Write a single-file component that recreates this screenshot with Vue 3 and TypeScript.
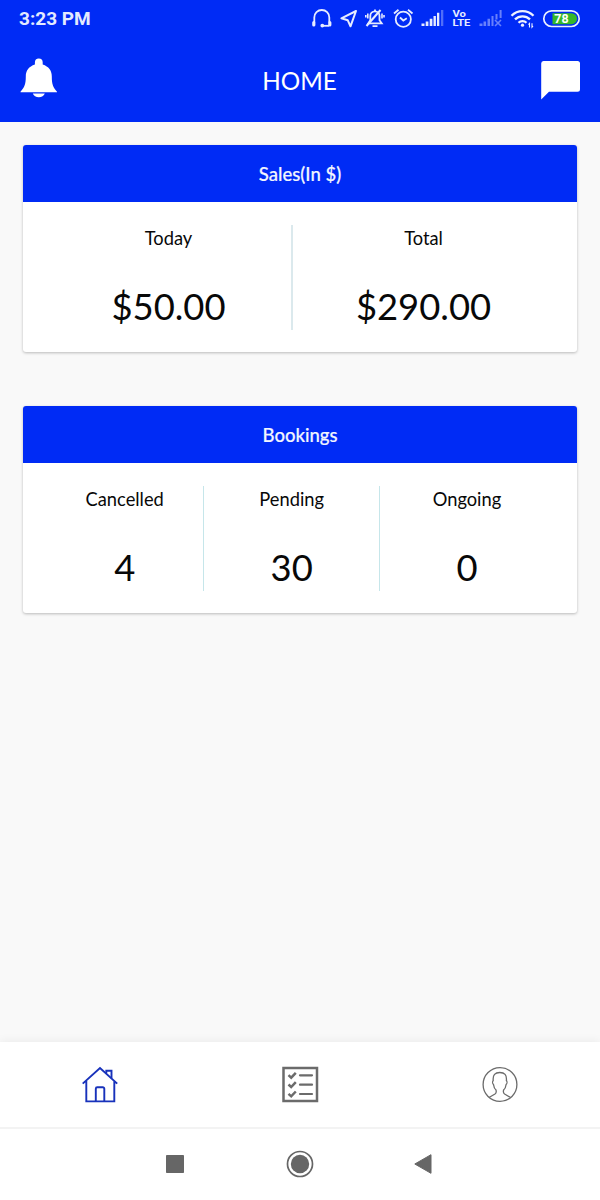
<script setup lang="ts">
interface Stat {
  label: string
  value: string
}

interface Summary {
  title: string
  kind: string
  stats: Stat[]
}

const summaries: Summary[] = [
  {
    title: 'Sales(In $)',
    kind: 'sales',
    stats: [
      { label: 'Today', value: '$50.00' },
      { label: 'Total', value: '$290.00' },
    ],
  },
  {
    title: 'Bookings',
    kind: 'bookings',
    stats: [
      { label: 'Cancelled', value: '4' },
      { label: 'Pending', value: '30' },
      { label: 'Ongoing', value: '0' },
    ],
  },
]
</script>

<template>
  <div class="screen">
    <header class="top">
      <div class="status">
        <span class="clock">3:23 PM</span>
        <div class="status-icons">
          <!-- headset -->
          <svg width="28" height="22" viewBox="310 8 28 22" fill="none" stroke="#e6ecff" stroke-width="1.8">
            <path d="M314.300 22.500V17.500a7.500 7.500 0 0 1 15 0v5" />
            <path d="M313.800 22.500v2.500M329.800 22.500v2.500" stroke-width="3.200" stroke-linecap="round" />
            <path d="M329 25.800h-7" />
            <circle cx="322.300" cy="25.600" r="1" fill="#e6ecff" />
          </svg>
          <!-- location arrow -->
          <svg width="25" height="22" viewBox="338 8 25 22" fill="none" stroke="#e6ecff" stroke-width="2" stroke-linejoin="round">
            <path d="M356 11L341.400 18.300l6.400 2 2.700 6z" />
          </svg>
          <!-- muted bell -->
          <svg width="28" height="22" viewBox="363 8 28 22" fill="none" stroke="#e6ecff" stroke-width="1.800">
            <path d="M368.300 23.300h13.400l-2.200-3v-4.300a4.600 4.600 0 0 0-9.200 0v4.300z" />
            <path d="M372.500 26.200h5M375 9.500v2" />
            <path d="M367.800 13.500v5M365.800 15v2.500M382 13.500v5M384 15v2.500" stroke-width="1.600" />
            <path d="M366.500 26L380.500 10" stroke-width="2" />
          </svg>
          <!-- alarm clock -->
          <svg width="29" height="22" viewBox="391 8 29 22" fill="none" stroke="#e6ecff" stroke-width="1.800">
            <circle cx="403.300" cy="19.200" r="7.600" />
            <path d="M400 17.500l3.300 3 3.500-2.200M394 13.500l4.500-3.800M412.500 13.500L408 9.700" />
          </svg>
          <!-- signal -->
          <svg width="30" height="22" viewBox="420 8 30 22" fill="#e6ecff">
            <path d="M421.500 23.500h3V26h-3zM425.700 21.500h2.700V26h-2.700zM429.700 18.800h2.700V26h-2.700zM433.500 16h2.400v10h-2.400zM437 12.800h2.300V26H437z" />
            <path d="M441 10h2.300v16H441z" opacity=".35" />
          </svg>
          <!-- VoLTE -->
          <svg width="28" height="22" viewBox="450 8 28 22">
            <text class="volte" x="452.400" y="16.500" textLength="13.500" lengthAdjust="spacingAndGlyphs">Vo</text>
            <text class="volte" x="452.400" y="26.300" textLength="18" lengthAdjust="spacingAndGlyphs">LTE</text>
          </svg>
          <!-- second sim, no signal -->
          <svg width="32" height="22" viewBox="478 8 32 22" fill="#6880fb">
            <path d="M479.500 23.500h3V26h-3zM483.500 21.500h2.600V26h-2.600zM487.500 18.800h2.500V26h-2.500zM491.500 16h2v10h-2zM495.500 14h2v5.500h-2zM499.600 10h2v8h-2z" />
            <path d="M495 20l6 6M501 20l-6 6" stroke="#6880fb" stroke-width="1.600" />
          </svg>
          <!-- wifi -->
          <svg width="32" height="22" viewBox="510 8 32 22" fill="none" stroke="#eef2ff" stroke-width="2.300">
            <path d="M511.500 15.800a15.500 15.500 0 0 1 22 0M515 19.400a10.600 10.600 0 0 1 15 0M518.500 22.800a5.700 5.700 0 0 1 8 0" />
            <circle cx="522.500" cy="25.200" r="1.600" fill="#eef2ff" stroke="none" />
            <path d="M529.500 27.500v-4l-1 1.200M532 23.200v4l1-1.200" stroke-width="1.100" />
          </svg>
          <!-- battery -->
          <svg width="40" height="22" viewBox="542 8 40 22">
            <rect x="543.800" y="10.900" width="35.400" height="15.600" rx="7.800" fill="#002bf5" stroke="#eaf0ff" stroke-width="1.700" />
            <path d="M552.500 13.200h19a5.500 5.500 0 0 1 0 11h-19z" fill="#35b82a" />
            <text class="battery" x="561.500" y="23.100">78</text>
          </svg>
        </div>
      </div>
      <div class="appbar">
        <svg width="38" height="40" viewBox="20 58.5 38 40" fill="#fff">
          <path d="M34.900 65v-2a3.900 3.900 0 0 1 7.800 0v2c6 2 9.100 6 9.100 12 0 8 1.200 10.500 5.200 15.300V92.800H20.500v-.5C24.500 87.500 25.800 85 25.800 77c0-6 3.100-10 9.100-12z" />
          <path d="M32.800 94h12c-.8 2.400-3.200 3.800-6 3.800s-5.200-1.400-6-3.800z" />
        </svg>
        <h1>HOME</h1>
        <svg width="40" height="40" viewBox="541 60 40 40" fill="#fff">
          <path d="M543.500 61H577.500a2.500 2.500 0 0 1 2.500 2.500V89.200a2.500 2.500 0 0 1-2.500 2.500H549L541.200 99.500V63.500a2.500 2.500 0 0 1 2.300-2.500z" />
        </svg>
      </div>
    </header>

    <main>
      <section v-for="s in summaries" :key="s.title" class="card">
        <h2>{{ s.title }}</h2>
        <div class="stats" :class="s.kind">
          <div v-for="stat in s.stats" :key="stat.label" class="stat">
            <span class="label">{{ stat.label }}</span>
            <span class="value">{{ stat.value }}</span>
          </div>
        </div>
      </section>
    </main>

    <nav class="tabs">
      <svg width="40" height="40" viewBox="80 1065 40 40" fill="none" stroke="#1832bb" stroke-width="1.900">
        <path d="M82.700 1083.600L100 1068l17.200 15.600M86.300 1081v20.400h28v-20.400" />
        <path d="M95.800 1101v-12.300a1.500 1.500 0 0 1 1.500-1.500h5.500a1.500 1.500 0 0 1 1.500 1.500v12.300M106.300 1073.300v-2.600h5.200v7.500" />
      </svg>
      <svg width="40" height="40" viewBox="280 1065 40 40" fill="none" stroke="#6b6b6b">
        <rect x="283.500" y="1068" width="33.500" height="33" stroke-width="2.500" />
        <path d="M288.500 1075.200l2.700 2.500 4.600-4.800M288.500 1084.500l2.700 2.500 4.600-4.800M288.500 1093.800l2.700 2.500 4.600-4.800" stroke-width="2.500" />
        <path d="M300 1075.300h12M300 1084.700h12M300 1094h12" stroke-width="2.200" stroke-linecap="round" />
      </svg>
      <svg width="40" height="40" viewBox="480 1065 40 40" fill="none" stroke="#6b6b6b" stroke-width="1.300">
        <circle cx="500" cy="1084.500" r="16.900" />
        <path d="M489 1097.500l6-3.500c1.200-.8 1.500-2.200 1-4-1.500-1.200-2.200-3-2.500-5.500-1-.8-1.200-2.800-.3-4-.5-5.500 1.800-8 6.600-8s7.100 2.500 6.600 8c.9 1.200.7 3.200-.3 4-.3 2.500-1 4.300-2.500 5.500-.5 1.800-.2 3.200 1 4l6 3.500" />
      </svg>
    </nav>

    <footer class="system">
      <svg width="18" height="18" viewBox="0 0 18 18" fill="#666"><rect width="18" height="18" rx=".8" /></svg>
      <svg width="28" height="28" viewBox="0 0 28 28" fill="#666">
        <circle cx="14" cy="14" r="9.200" />
        <circle cx="14" cy="14" r="12.500" fill="none" stroke="#666" stroke-width="1.700" />
      </svg>
      <svg width="18" height="20" viewBox="0 0 18 20" fill="#666" stroke="#666" stroke-linejoin="round"><path d="M.8 10L17 .7v18.600z" /></svg>
    </footer>
  </div>
</template>

<style>
body {
  margin: 0;
}
</style>

<style scoped>
.screen {
  width: 600px;
  height: 1200px;
  display: flex;
  flex-direction: column;
  overflow: hidden;
  background: #f9f9f9;
  color: #080808;
  font-family: Lato, sans-serif;
}

svg {
  display: block;
  flex: none;
}

.top {
  height: 122px;
  flex: none;
  background: #002bf5;
  color: #fff;
}

.status {
  height: 38px;
  display: flex;
  justify-content: space-between;
  padding: 0 18px 0 19px;
}

.clock {
  font: 700 19px/38px Roboto, sans-serif;
  color: #e3eaff;
}

.status-icons {
  display: flex;
  align-items: center;
}

.volte {
  font: 700 8.300px Roboto, sans-serif;
  fill: #e6ecff;
}

.battery {
  font: 700 12.500px Roboto, sans-serif;
  text-anchor: middle;
  fill: #fff;
}

.appbar {
  height: 84px;
  display: flex;
  align-items: center;
  justify-content: space-between;
  padding: 0 19px 0 20px;
}

.appbar svg:first-child {
  margin-bottom: 4px;
}

h1 {
  margin: 0;
  font-size: 24.300px;
  font-weight: 400;
  line-height: 32px;
  padding-top: 1px;
}

main {
  flex: 1;
  padding: 23px 23px 0;
}

.card {
  height: 207px;
  margin-bottom: 54px;
  border-radius: 3px;
  overflow: hidden;
  background: #fff;
  box-shadow: 0 1px 3px rgba(0, 0, 0, .26);
}

h2 {
  height: 56.500px;
  margin: 0;
  background: #002bf5;
  color: #f2f5ff;
  font-size: 18.500px;
  font-weight: 500;
  line-height: 58px;
  text-align: center;
  -webkit-text-stroke: .2px #f2f5ff;
}

.stats {
  display: grid;
  padding: 23px 23px 0;
}

.sales {
  grid-template-columns: 247px 261px;
}

.bookings {
  grid-template-columns: 158.400px 175.600px 174px;
}

.stat {
  height: 105px;
  box-sizing: border-box;
  display: flex;
  flex-direction: column;
  align-items: center;
}

.stat:not(:last-child) {
  border-right: 1px solid #c6e6ea;
}

.sales .stat:first-child {
  border-right: 2px solid #dbe9ed;
}

.label {
  font-size: 18.300px;
  line-height: 26px;
}

.value {
  margin-top: 33px;
  font-size: 36.400px;
  line-height: 44px;
}

.tabs {
  height: 85px;
  flex: none;
  display: flex;
  align-items: center;
  justify-content: space-around;
  background: #fff;
  border-bottom: 2px solid #f3f3f3;
  box-shadow: 0 0 10px rgba(0, 0, 0, .07);
}

.system {
  height: 71px;
  flex: none;
  display: flex;
  align-items: center;
  justify-content: space-between;
  box-sizing: border-box;
  padding: 0 168px 1px 166px;
  background: #fff;
}

.system svg:nth-child(2) {
  margin-left: 2px;
}
</style>
